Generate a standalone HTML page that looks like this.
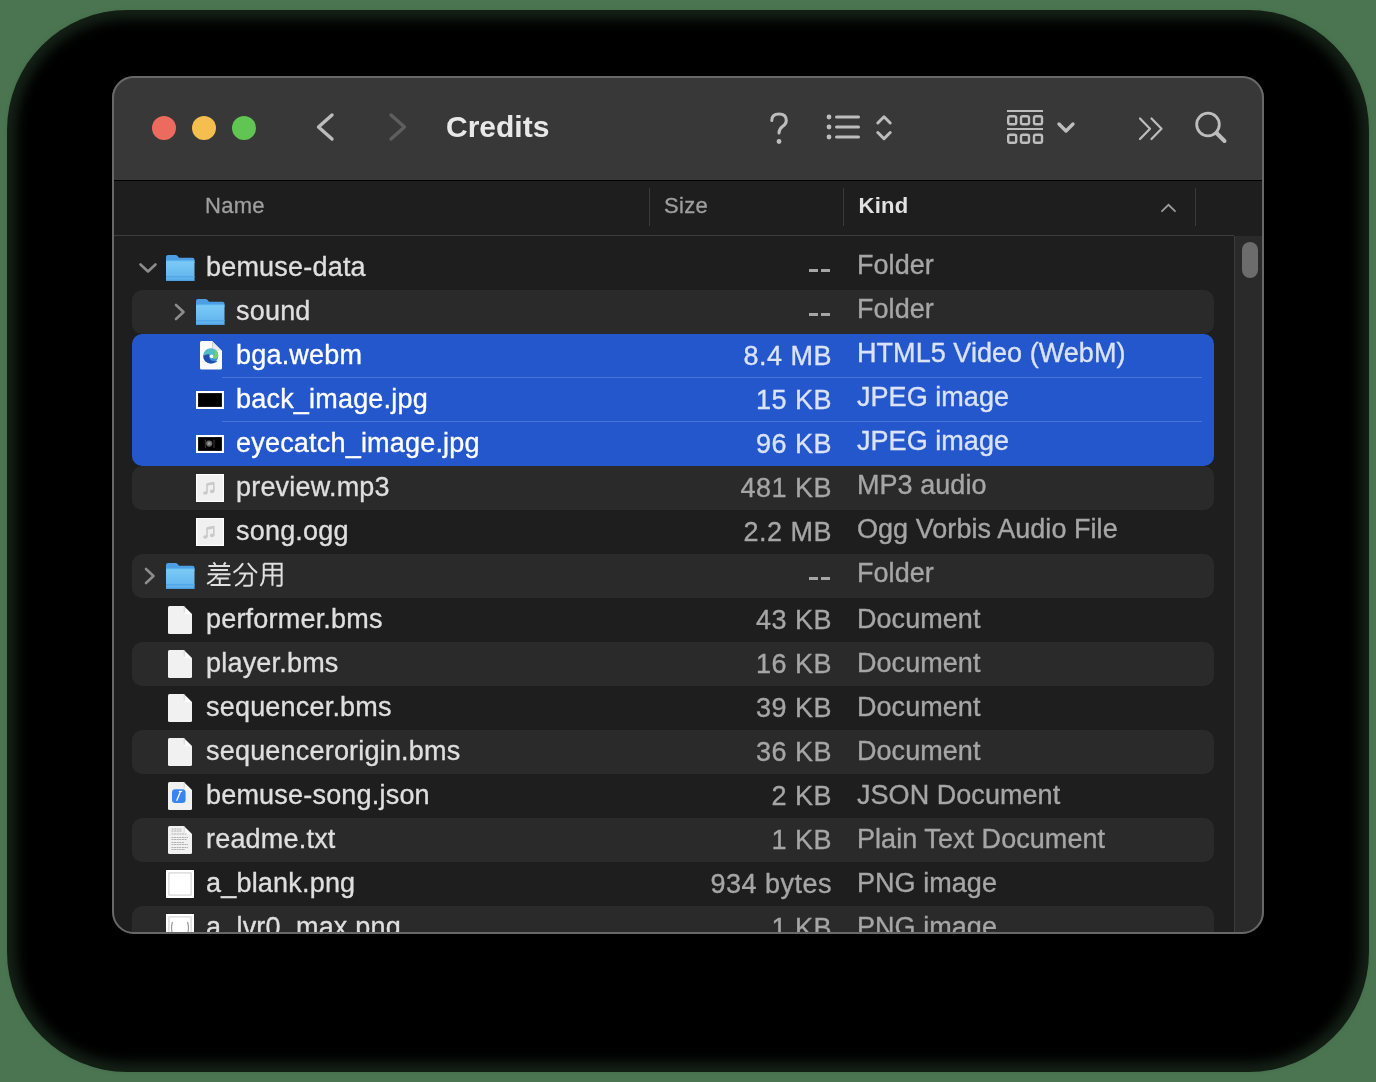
<!DOCTYPE html>
<html><head><meta charset="utf-8"><style>
html,body{margin:0;padding:0;}
body{width:1376px;height:1082px;background:#4a7550;position:relative;overflow:hidden;font-family:"Liberation Sans",sans-serif;}
#shadow{position:absolute;left:7px;top:10px;width:1362px;height:1062px;background:rgba(0,0,0,0.72);border-radius:120px;}
#shadow2{position:absolute;left:17px;top:20px;width:1342px;height:1042px;background:#000;border-radius:110px;filter:blur(6px);}
#win{position:absolute;left:112px;top:76px;width:1152px;height:858px;border-radius:22px;overflow:hidden;background:#1e1e1e;}
#inner{position:absolute;left:-112px;top:-76px;width:1376px;height:1082px;will-change:transform;}
#tb{position:absolute;left:112px;top:76px;width:1152px;height:104px;background:#383838;}
#tbl{position:absolute;left:112px;top:180px;width:1152px;height:1px;background:#000;}
#hd{position:absolute;left:112px;top:181px;width:1152px;height:54px;background:#1e1e1e;}
#hdl{position:absolute;left:112px;top:235px;width:1122px;height:1px;background:#3d3d3d;}
.sep{position:absolute;top:188px;width:1px;height:38px;background:#3a3a3a;}
#track{position:absolute;left:1234px;top:236px;width:30px;height:700px;background:#2a2a2a;border-left:1px solid #3c3c3c;}
#thumb{position:absolute;left:1242px;top:242px;width:16px;height:36px;border-radius:8px;background:#6c6c6c;}
#border{position:absolute;left:112px;top:76px;width:1152px;height:858px;box-sizing:border-box;border-radius:22px;border:2px solid #686868;pointer-events:none;}
.rowbg{position:absolute;left:132px;width:1082px;height:44px;border-radius:10px;background:#2a2a2a;}
#sel{position:absolute;left:132px;top:334px;width:1082px;height:132px;border-radius:10px;background:#2456cc;}
.selsep{position:absolute;left:222px;width:980px;height:1px;background:#4a75d8;}
.ic{position:absolute;}
.t{position:absolute;white-space:nowrap;font-size:27px;line-height:44px;height:44px;-webkit-text-stroke:0.35px currentColor;}
.nm{letter-spacing:0.2px;}
.dash{position:absolute;width:9px;height:3px;}
.sz{left:632px;width:200px;text-align:right;letter-spacing:0.5px;}
.kd{left:857px;letter-spacing:0.05px;}
.hdt{position:absolute;white-space:nowrap;font-size:22px;line-height:30px;top:191px;color:#9f9f9f;-webkit-text-stroke:0.3px currentColor;letter-spacing:0.3px;}
.light{position:absolute;width:24px;height:24px;border-radius:50%;top:116px;}
</style></head><body>
<div id="shadow"></div><div id="shadow2"></div>
<div id="win"><div id="inner">
<div id="tb"></div>
<div id="tbl"></div>
<div id="hd"></div>
<div id="hdl"></div>
<div class="light" style="left:152px;background:#ed6a5e"></div>
<div class="light" style="left:192px;background:#f4bf4f"></div>
<div class="light" style="left:232px;background:#61c554"></div>
<svg class="ic" style="left:300px;top:100px" width="120" height="54" viewBox="300 100 120 54">
<path d="M332 115 L318.5 127 L332 139" stroke="#bcbcbc" stroke-width="3.4" fill="none" stroke-linecap="round" stroke-linejoin="round"/>
<path d="M391 115 L404.5 127 L391 139" stroke="#5e5e5e" stroke-width="3.4" fill="none" stroke-linecap="round" stroke-linejoin="round"/>
</svg>
<div style="position:absolute;left:446px;top:107px;font-size:30px;line-height:40px;font-weight:700;color:#e8e8e8;white-space:nowrap">Credits</div>
<svg class="ic" style="left:750px;top:100px" width="500" height="54" viewBox="750 100 500 54">
<g stroke="#bdbdbd" stroke-width="3" fill="none" stroke-linecap="round" stroke-linejoin="round">
<path d="M771.8 120.5 Q771.8 114 779 114 Q786.3 114 786.3 120.5 Q786.3 124 782.5 126.5 Q779 129 779 133"/>
<path d="M836.5 117 L858.5 117 M836.5 127 L858.5 127 M836.5 137 L858.5 137"/>
<path d="M877.8 123 L884 116.8 L890.2 123 M877.8 132.5 L884 138.7 L890.2 132.5"/>
<path d="M1059 124 L1066 131 L1073 124" stroke-width="3.4"/>
</g>
<g fill="#bdbdbd"><circle cx="779" cy="141.5" r="2.4"/><circle cx="829" cy="117" r="2.4"/><circle cx="829" cy="127" r="2.4"/><circle cx="829" cy="137" r="2.4"/></g>
<g stroke="#bdbdbd" fill="none" stroke-width="2.4">
<path d="M1007 111 L1043 111 M1007 129 L1043 129" stroke-width="2"/>
<rect x="1008.2" y="116.2" width="8" height="8" rx="1.8"/><rect x="1021" y="116.2" width="8" height="8" rx="1.8"/><rect x="1034" y="116.2" width="8" height="8" rx="1.8"/>
<rect x="1008.2" y="134.8" width="8" height="8" rx="1.8"/><rect x="1021" y="134.8" width="8" height="8" rx="1.8"/><rect x="1034" y="134.8" width="8" height="8" rx="1.8"/>
</g>
<g stroke="#bdbdbd" fill="none" stroke-width="2.2" stroke-linecap="round" stroke-linejoin="round">
<path d="M1140 118.5 L1150 128.8 L1140 139 M1151.5 118.5 L1161.5 128.8 L1151.5 139"/>
<circle cx="1208" cy="124.5" r="11.3" stroke-width="2.8"/>
<path d="M1216.5 133 L1224.5 141" stroke-width="4"/>
</g>
</svg>
<div class="hdt" style="left:205px">Name</div>
<div class="hdt" style="left:664px">Size</div>
<div class="hdt" style="left:858.5px;font-weight:700;color:#e2e2e2;-webkit-text-stroke:0">Kind</div>
<div class="sep" style="left:649px"></div>
<div class="sep" style="left:843px"></div>
<div class="sep" style="left:1195px"></div>
<svg class="ic" style="left:1158px;top:200px" width="22" height="16" viewBox="0 0 22 16"><path d="M4 11.2 L10.5 4.8 L17 11.2" stroke="#9c9c9c" stroke-width="1.8" fill="none" stroke-linecap="round"/></svg>
<div id="sel"></div>
<div class="selsep" style="top:377px"></div>
<div class="selsep" style="top:421px"></div>
<svg class="ic" style="left:138px;top:262px" width="20" height="12" viewBox="0 0 20 12"><path d="M2.5 2.5 L10 9.5 L17.5 2.5" stroke="#8c8c8c" stroke-width="2.6" fill="none" stroke-linecap="round" stroke-linejoin="round"/></svg>
<svg class="ic" style="left:166px;top:255px" width="29" height="27" viewBox="0 0 29 27">
<defs><linearGradient id="fg166255" x1="0" y1="0" x2="0" y2="1"><stop offset="0" stop-color="#7ccbf7"/><stop offset="1" stop-color="#5eb1ec"/></linearGradient></defs>
<path d="M0 2 Q0 0 2 0 L9.5 0 Q10.8 0 11.6 1 L13 2.8 L26.5 2.8 Q28.5 2.8 28.5 4.8 L28.5 8 L0 8 Z" fill="#4c9fe5"/>
<rect x="0" y="5.6" width="28.5" height="20.4" rx="1.6" fill="url(#fg166255)"/>
<rect x="0" y="5.2" width="28.5" height="1" fill="#5aaeea"/>
<rect x="0" y="21" width="28.5" height="1.6" fill="#53a8e8"/>
<rect x="0" y="24.6" width="28.5" height="1.4" fill="#4d9fe0"/>
</svg>
<div class="t nm" style="left:206px;top:245px;color:#dfdfdf">bemuse-data</div>
<div class="dash" style="left:809px;top:269px;background:#a6a6a6"></div><div class="dash" style="left:821px;top:269px;background:#a6a6a6"></div>
<div class="t kd" style="top:243px;color:#a6a6a6">Folder</div>
<div class="rowbg" style="top:290px"></div>
<svg class="ic" style="left:173px;top:303px" width="14" height="18" viewBox="0 0 14 18"><path d="M3 2 L10.5 9 L3 16" stroke="#8c8c8c" stroke-width="2.6" fill="none" stroke-linecap="round" stroke-linejoin="round"/></svg>
<svg class="ic" style="left:196px;top:299px" width="29" height="27" viewBox="0 0 29 27">
<defs><linearGradient id="fg196299" x1="0" y1="0" x2="0" y2="1"><stop offset="0" stop-color="#7ccbf7"/><stop offset="1" stop-color="#5eb1ec"/></linearGradient></defs>
<path d="M0 2 Q0 0 2 0 L9.5 0 Q10.8 0 11.6 1 L13 2.8 L26.5 2.8 Q28.5 2.8 28.5 4.8 L28.5 8 L0 8 Z" fill="#4c9fe5"/>
<rect x="0" y="5.6" width="28.5" height="20.4" rx="1.6" fill="url(#fg196299)"/>
<rect x="0" y="5.2" width="28.5" height="1" fill="#5aaeea"/>
<rect x="0" y="21" width="28.5" height="1.6" fill="#53a8e8"/>
<rect x="0" y="24.6" width="28.5" height="1.4" fill="#4d9fe0"/>
</svg>
<div class="t nm" style="left:236px;top:289px;color:#dfdfdf">sound</div>
<div class="dash" style="left:809px;top:313px;background:#a6a6a6"></div><div class="dash" style="left:821px;top:313px;background:#a6a6a6"></div>
<div class="t kd" style="top:287px;color:#a6a6a6">Folder</div>
<svg class="ic" style="left:200px;top:341px" width="22" height="28.5" viewBox="0 0 22 28.5">
<path d="M1.5 0 L12 0 L22 10 L22 27.0 Q22 28.5 20.5 28.5 L1.5 28.5 Q0 28.5 0 27.0 L0 1.5 Q0 0 1.5 0 Z" fill="#fcfcfc"/>
<path d="M12 0 L12 8.5 Q12 10 13.5 10 L22 10 Z" fill="#e9e9e9"/>
<path d="M12.5 0.5 L12.5 8.5" stroke="#d0d0d0" stroke-width="1"/>
<circle cx="10.7" cy="15" r="7.5" fill="#3a8fdc"/><path d="M3.3 14.2 Q4.6 7.5 11 7.5 Q17.9 7.5 18.2 14.2 Q18.2 17.9 14.4 17.9 Q12.3 17.9 11.8 16.6 Z" fill="#52bdc4"/><path d="M14.5 8.2 Q18.2 10.2 18.2 14.2 Q18.2 17.9 14.4 17.9 L13.2 17.6 Q15.2 14 14.5 8.2 Z" fill="#6fd06c"/><path d="M3.3 15 Q3.6 21.8 10.6 22.5 Q15.4 22.6 17.6 19.8 Q14 21 11.4 19.6 Q8.4 17.6 9.4 13.2 Q6.2 12.8 3.3 15 Z" fill="#1f4fae"/><circle cx="11.6" cy="15.4" r="1.8" fill="#fff"/></svg>
<div class="t nm" style="left:236px;top:333px;color:#ffffff">bga.webm</div>
<div class="t sz" style="top:334px;color:#dbe3f7">8.4 MB</div>
<div class="t kd" style="top:331px;color:#dbe3f7">HTML5 Video (WebM)</div>
<svg class="ic" style="left:196px;top:391px" width="28" height="18" viewBox="0 0 28 18"><rect x="0" y="0" width="28" height="18" fill="#fff"/><rect x="2.1" y="2.1" width="23.8" height="13.8" fill="#000"/></svg>
<div class="t nm" style="left:236px;top:377px;color:#ffffff">back_image.jpg</div>
<div class="t sz" style="top:378px;color:#dbe3f7">15 KB</div>
<div class="t kd" style="top:375px;color:#dbe3f7">JPEG image</div>
<svg class="ic" style="left:196px;top:435px" width="28" height="18" viewBox="0 0 28 18"><rect x="0" y="0" width="28" height="18" fill="#fff"/><rect x="2.1" y="2.1" width="23.8" height="13.8" fill="#000"/><circle cx="13.2" cy="8.6" r="3.1" fill="#6a6a6a"/><circle cx="13.2" cy="8.6" r="1.5" fill="#9a9a9a"/><path d="M9.3 4.5 L9.3 13 M18 4.5 L18 13" stroke="#4a4a4a" stroke-width="0.8"/></svg>
<div class="t nm" style="left:236px;top:421px;color:#ffffff">eyecatch_image.jpg</div>
<div class="t sz" style="top:422px;color:#dbe3f7">96 KB</div>
<div class="t kd" style="top:419px;color:#dbe3f7">JPEG image</div>
<div class="rowbg" style="top:466px"></div>
<svg class="ic" style="left:196px;top:474px" width="28" height="28" viewBox="0 0 28 28"><rect x="0" y="0" width="28" height="28" fill="#ffffff"/><rect x="1.2" y="1.2" width="25.6" height="25.6" fill="#f0f0f0"/><path d="M11 19 L11 10.5 L17.8 9 L17.8 17.3" stroke="#c9c9c9" stroke-width="1.6" fill="none"/><path d="M11 10.5 L17.8 9" stroke="#c9c9c9" stroke-width="2.6"/><ellipse cx="9.3" cy="19" rx="2.2" ry="1.8" fill="#c9c9c9"/><ellipse cx="16.1" cy="17.4" rx="2.2" ry="1.8" fill="#c9c9c9"/></svg>
<div class="t nm" style="left:236px;top:465px;color:#dfdfdf">preview.mp3</div>
<div class="t sz" style="top:466px;color:#a6a6a6">481 KB</div>
<div class="t kd" style="top:463px;color:#a6a6a6">MP3 audio</div>
<svg class="ic" style="left:196px;top:518px" width="28" height="28" viewBox="0 0 28 28"><rect x="0" y="0" width="28" height="28" fill="#ffffff"/><rect x="1.2" y="1.2" width="25.6" height="25.6" fill="#f0f0f0"/><path d="M11 19 L11 10.5 L17.8 9 L17.8 17.3" stroke="#c9c9c9" stroke-width="1.6" fill="none"/><path d="M11 10.5 L17.8 9" stroke="#c9c9c9" stroke-width="2.6"/><ellipse cx="9.3" cy="19" rx="2.2" ry="1.8" fill="#c9c9c9"/><ellipse cx="16.1" cy="17.4" rx="2.2" ry="1.8" fill="#c9c9c9"/></svg>
<div class="t nm" style="left:236px;top:509px;color:#dfdfdf">song.ogg</div>
<div class="t sz" style="top:510px;color:#a6a6a6">2.2 MB</div>
<div class="t kd" style="top:507px;color:#a6a6a6">Ogg Vorbis Audio File</div>
<div class="rowbg" style="top:554px"></div>
<svg class="ic" style="left:143px;top:567px" width="14" height="18" viewBox="0 0 14 18"><path d="M3 2 L10.5 9 L3 16" stroke="#8c8c8c" stroke-width="2.6" fill="none" stroke-linecap="round" stroke-linejoin="round"/></svg>
<svg class="ic" style="left:166px;top:563px" width="29" height="27" viewBox="0 0 29 27">
<defs><linearGradient id="fg166563" x1="0" y1="0" x2="0" y2="1"><stop offset="0" stop-color="#7ccbf7"/><stop offset="1" stop-color="#5eb1ec"/></linearGradient></defs>
<path d="M0 2 Q0 0 2 0 L9.5 0 Q10.8 0 11.6 1 L13 2.8 L26.5 2.8 Q28.5 2.8 28.5 4.8 L28.5 8 L0 8 Z" fill="#4c9fe5"/>
<rect x="0" y="5.6" width="28.5" height="20.4" rx="1.6" fill="url(#fg166563)"/>
<rect x="0" y="5.2" width="28.5" height="1" fill="#5aaeea"/>
<rect x="0" y="21" width="28.5" height="1.6" fill="#53a8e8"/>
<rect x="0" y="24.6" width="28.5" height="1.4" fill="#4d9fe0"/>
</svg>
<svg class="ic" style="left:200px;top:556px" width="90" height="40" viewBox="0 0 1376 612">
<g stroke="#dfdfdf" stroke-width="31" fill="none" stroke-linecap="butt" stroke-linejoin="miter">
<path d="M205 98 L238 136 M392 98 L362 136 M128 152 L458 152 M160 215 L428 215 M118 278 L466 278 M268 282 Q210 372 108 425 M252 345 L440 345 M302 345 L302 440 M162 442 L466 442"/>
<path d="M658 112 Q605 200 512 255 M732 108 Q790 195 872 258 M598 268 L792 268 L792 425 Q792 456 760 456 L662 456 M692 275 Q668 385 538 458"/>
<path d="M975 120 L975 335 Q968 410 925 458 M975 120 L1248 120 L1248 432 Q1248 456 1222 456 L1168 456 M975 212 L1248 212 M975 300 L1248 300 M1108 120 L1108 456"/>
</g></svg>
<div class="dash" style="left:809px;top:577px;background:#a6a6a6"></div><div class="dash" style="left:821px;top:577px;background:#a6a6a6"></div>
<div class="t kd" style="top:551px;color:#a6a6a6">Folder</div>
<svg class="ic" style="left:168px;top:606px" width="24" height="28" viewBox="0 0 24 28">
<path d="M1.5 0 L15.7 0 L24 8.3 L24 26.5 Q24 28 22.5 28 L1.5 28 Q0 28 0 26.5 L0 1.5 Q0 0 1.5 0 Z" fill="#f1f1f1"/>
<path d="M15.7 0 L15.7 6.800000000000001 Q15.7 8.3 17.2 8.3 L24 8.3 Z" fill="#fafafa"/>
<path d="M16.2 0.5 L16.2 6.800000000000001" stroke="#d0d0d0" stroke-width="1"/>
</svg>
<div class="t nm" style="left:206px;top:597px;color:#dfdfdf">performer.bms</div>
<div class="t sz" style="top:598px;color:#a6a6a6">43 KB</div>
<div class="t kd" style="top:597px;color:#a6a6a6">Document</div>
<div class="rowbg" style="top:642px"></div>
<svg class="ic" style="left:168px;top:650px" width="24" height="28" viewBox="0 0 24 28">
<path d="M1.5 0 L15.7 0 L24 8.3 L24 26.5 Q24 28 22.5 28 L1.5 28 Q0 28 0 26.5 L0 1.5 Q0 0 1.5 0 Z" fill="#f1f1f1"/>
<path d="M15.7 0 L15.7 6.800000000000001 Q15.7 8.3 17.2 8.3 L24 8.3 Z" fill="#fafafa"/>
<path d="M16.2 0.5 L16.2 6.800000000000001" stroke="#d0d0d0" stroke-width="1"/>
</svg>
<div class="t nm" style="left:206px;top:641px;color:#dfdfdf">player.bms</div>
<div class="t sz" style="top:642px;color:#a6a6a6">16 KB</div>
<div class="t kd" style="top:641px;color:#a6a6a6">Document</div>
<svg class="ic" style="left:168px;top:694px" width="24" height="28" viewBox="0 0 24 28">
<path d="M1.5 0 L15.7 0 L24 8.3 L24 26.5 Q24 28 22.5 28 L1.5 28 Q0 28 0 26.5 L0 1.5 Q0 0 1.5 0 Z" fill="#f1f1f1"/>
<path d="M15.7 0 L15.7 6.800000000000001 Q15.7 8.3 17.2 8.3 L24 8.3 Z" fill="#fafafa"/>
<path d="M16.2 0.5 L16.2 6.800000000000001" stroke="#d0d0d0" stroke-width="1"/>
</svg>
<div class="t nm" style="left:206px;top:685px;color:#dfdfdf">sequencer.bms</div>
<div class="t sz" style="top:686px;color:#a6a6a6">39 KB</div>
<div class="t kd" style="top:685px;color:#a6a6a6">Document</div>
<div class="rowbg" style="top:730px"></div>
<svg class="ic" style="left:168px;top:738px" width="24" height="28" viewBox="0 0 24 28">
<path d="M1.5 0 L15.7 0 L24 8.3 L24 26.5 Q24 28 22.5 28 L1.5 28 Q0 28 0 26.5 L0 1.5 Q0 0 1.5 0 Z" fill="#f1f1f1"/>
<path d="M15.7 0 L15.7 6.800000000000001 Q15.7 8.3 17.2 8.3 L24 8.3 Z" fill="#fafafa"/>
<path d="M16.2 0.5 L16.2 6.800000000000001" stroke="#d0d0d0" stroke-width="1"/>
</svg>
<div class="t nm" style="left:206px;top:729px;color:#dfdfdf">sequencerorigin.bms</div>
<div class="t sz" style="top:730px;color:#a6a6a6">36 KB</div>
<div class="t kd" style="top:729px;color:#a6a6a6">Document</div>
<svg class="ic" style="left:168px;top:782px" width="24" height="28" viewBox="0 0 24 28">
<path d="M1.5 0 L15.7 0 L24 8.3 L24 26.5 Q24 28 22.5 28 L1.5 28 Q0 28 0 26.5 L0 1.5 Q0 0 1.5 0 Z" fill="#f1f1f1"/>
<path d="M15.7 0 L15.7 6.800000000000001 Q15.7 8.3 17.2 8.3 L24 8.3 Z" fill="#fafafa"/>
<path d="M16.2 0.5 L16.2 6.800000000000001" stroke="#d0d0d0" stroke-width="1"/>
<rect x="4" y="7.3" width="13.6" height="13.6" rx="3.2" fill="#3a84f2"/><path d="M12.6 9.3 L8.7 18.8" stroke="#fff" stroke-width="1.3"/><path d="M10.8 9.6 L14.2 9.3" stroke="#fff" stroke-width="1.1"/></svg>
<div class="t nm" style="left:206px;top:773px;color:#dfdfdf">bemuse-song.json</div>
<div class="t sz" style="top:774px;color:#a6a6a6">2 KB</div>
<div class="t kd" style="top:773px;color:#a6a6a6">JSON Document</div>
<div class="rowbg" style="top:818px"></div>
<svg class="ic" style="left:168px;top:826px" width="24" height="28" viewBox="0 0 24 28">
<path d="M1.5 0 L15.7 0 L24 8.3 L24 26.5 Q24 28 22.5 28 L1.5 28 Q0 28 0 26.5 L0 1.5 Q0 0 1.5 0 Z" fill="#f1f1f1"/>
<path d="M15.7 0 L15.7 6.800000000000001 Q15.7 8.3 17.2 8.3 L24 8.3 Z" fill="#fafafa"/>
<path d="M16.2 0.5 L16.2 6.800000000000001" stroke="#d0d0d0" stroke-width="1"/>
<path d="M3.5 3 L14 3" stroke="#a8a8a8" stroke-width="0.9" stroke-dasharray="2 0.6"/><path d="M3.5 5 L14 5" stroke="#a8a8a8" stroke-width="0.9" stroke-dasharray="2 0.6"/><path d="M3.5 8 L19 8" stroke="#a8a8a8" stroke-width="0.9" stroke-dasharray="2 0.6"/><path d="M3.5 11.5 L20 11.5" stroke="#a8a8a8" stroke-width="0.9" stroke-dasharray="2 0.6"/><path d="M3.5 13.5 L19 13.5" stroke="#a8a8a8" stroke-width="0.9" stroke-dasharray="2 0.6"/><path d="M3.5 16.5 L16 16.5" stroke="#a8a8a8" stroke-width="0.9" stroke-dasharray="2 0.6"/><path d="M3.5 18.5 L20 18.5" stroke="#a8a8a8" stroke-width="0.9" stroke-dasharray="2 0.6"/><path d="M3.5 21.5 L20 21.5" stroke="#a8a8a8" stroke-width="0.9" stroke-dasharray="2 0.6"/><path d="M3.5 23.5 L17 23.5" stroke="#a8a8a8" stroke-width="0.9" stroke-dasharray="2 0.6"/></svg>
<div class="t nm" style="left:206px;top:817px;color:#dfdfdf">readme.txt</div>
<div class="t sz" style="top:818px;color:#a6a6a6">1 KB</div>
<div class="t kd" style="top:817px;color:#a6a6a6">Plain Text Document</div>
<svg class="ic" style="left:166px;top:870px" width="28" height="28" viewBox="0 0 28 28"><rect x="0" y="0" width="28" height="28" fill="#fff"/><rect x="2.9" y="2.9" width="22.2" height="22.2" fill="none" stroke="#cdcdcd" stroke-width="1"/></svg>
<div class="t nm" style="left:206px;top:861px;color:#dfdfdf">a_blank.png</div>
<div class="t sz" style="top:862px;color:#a6a6a6">934 bytes</div>
<div class="t kd" style="top:861px;color:#a6a6a6">PNG image</div>
<div class="rowbg" style="top:906px"></div>
<svg class="ic" style="left:166px;top:914px" width="28" height="28" viewBox="0 0 28 28"><rect x="0" y="0" width="28" height="28" fill="#fff"/><rect x="2.9" y="2.9" width="22.2" height="22.2" fill="none" stroke="#cdcdcd" stroke-width="1"/><path d="M6.5 8 Q4.5 14 6.5 20 M21.5 8 Q23.5 14 21.5 20" stroke="#9a9a9a" stroke-width="1.2" fill="none"/></svg>
<div class="t nm" style="left:206px;top:905px;color:#dfdfdf">a_lvr0_max.png</div>
<div class="t sz" style="top:906px;color:#a6a6a6">1 KB</div>
<div class="t kd" style="top:905px;color:#a6a6a6">PNG image</div>
<div id="track"></div>
<div id="thumb"></div>
</div></div>
<div id="border"></div>
</body></html>
